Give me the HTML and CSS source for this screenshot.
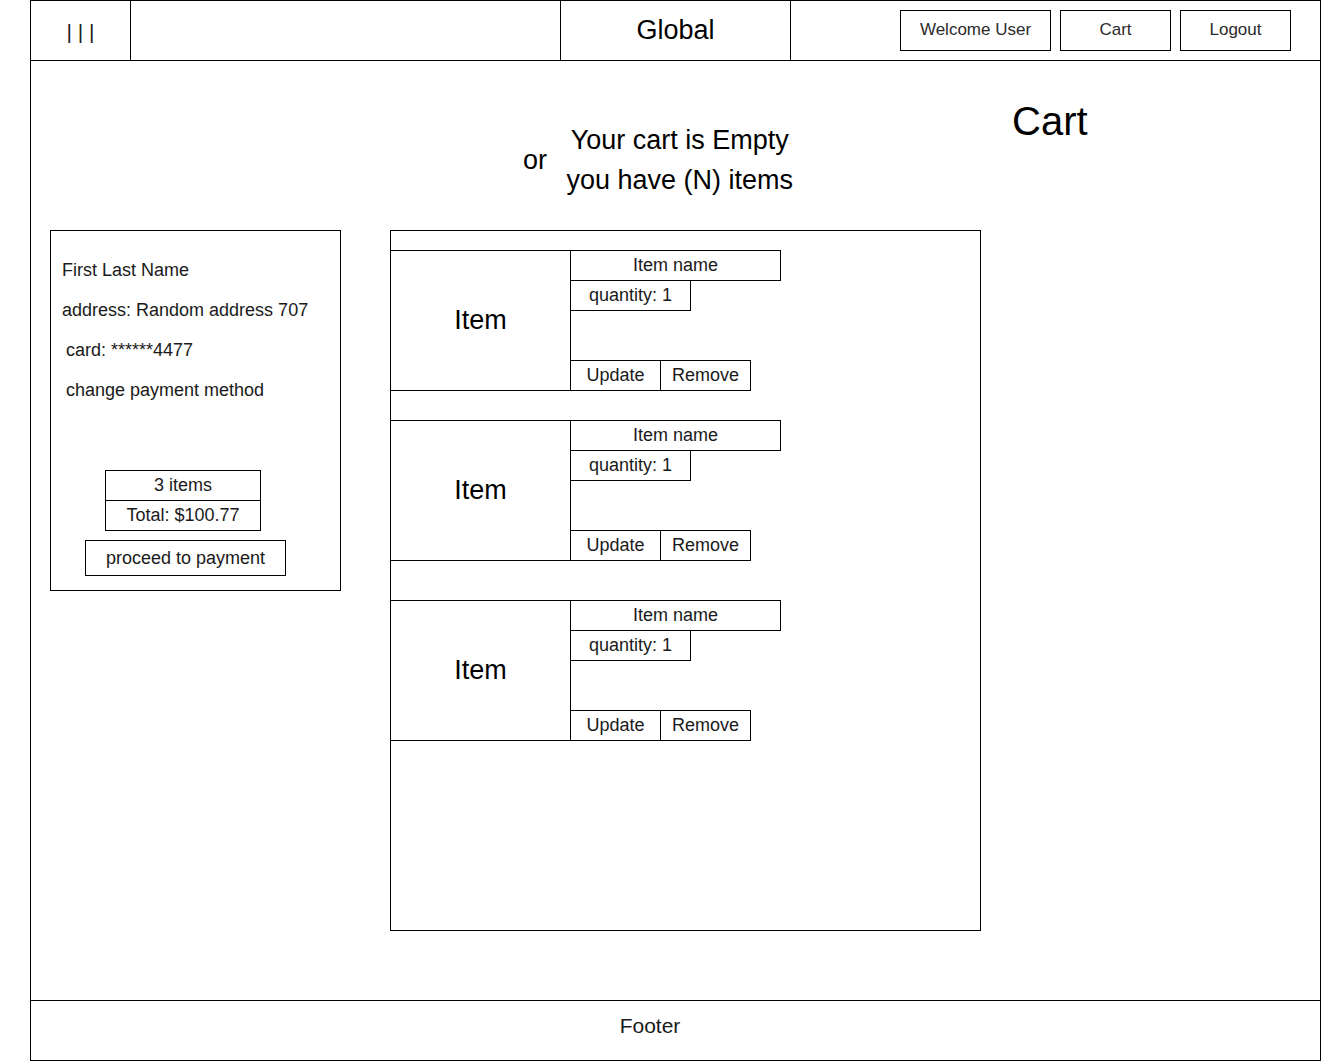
FILE: index.html
```html
<!DOCTYPE html>
<html lang="en">
<head>
<meta charset="utf-8">
<meta name="viewport" content="width=device-width, initial-scale=1">
<title>Cart</title>
<link rel="stylesheet" href="styles.css">
</head>
<body>
<div class="page">
  <header class="topbar">
    <button class="menu" type="button" aria-label="Menu">| | |</button>
    <div class="topbar-space"></div>
    <div class="brand">Global</div>
    <nav class="account">
      <a class="nav-button nav-wide" href="#user">Welcome User</a>
      <a class="nav-button" href="#cart">Cart</a>
      <a class="nav-button" href="#logout">Logout</a>
    </nav>
  </header>

  <main class="main">
    <div class="intro">
      <div class="status">
        <span>or</span>
        <div class="status-lines">
          <p>Your cart is Empty</p>
          <p>you have (N) items</p>
        </div>
      </div>
      <h1 class="title">Cart</h1>
    </div>

    <div class="columns">
      <aside class="summary">
        <div class="customer">
          <p>First Last Name</p>
          <p>address: Random address 707</p>
          <p class="indent">card: ******4477</p>
          <p class="indent"><a href="#payment-method">change payment method</a></p>
        </div>
        <div class="totals">
          <p>3 items</p>
          <p>Total: $100.77</p>
        </div>
        <button class="proceed" type="button">proceed to payment</button>
      </aside>

      <section class="items" aria-label="Items in cart">
        <article class="item">
          <div class="item-image">Item</div>
          <div class="item-details">
            <h2 class="item-name">Item name</h2>
            <p class="quantity">quantity: 1</p>
            <div class="actions">
              <button type="button">Update</button>
              <button type="button">Remove</button>
            </div>
          </div>
        </article>
        <article class="item">
          <div class="item-image">Item</div>
          <div class="item-details">
            <h2 class="item-name">Item name</h2>
            <p class="quantity">quantity: 1</p>
            <div class="actions">
              <button type="button">Update</button>
              <button type="button">Remove</button>
            </div>
          </div>
        </article>
        <article class="item">
          <div class="item-image">Item</div>
          <div class="item-details">
            <h2 class="item-name">Item name</h2>
            <p class="quantity">quantity: 1</p>
            <div class="actions">
              <button type="button">Update</button>
              <button type="button">Remove</button>
            </div>
          </div>
        </article>
      </section>
    </div>
  </main>

  <footer class="footer">Footer</footer>
</div>
</body>
</html>
```

FILE: styles.css
```css
* {
  box-sizing: border-box;
}

body {
  margin: 0;
  background: #fff;
  color: #1a1a1a;
  font-family: "Liberation Sans", Arial, sans-serif;
  font-size: 18px;
  line-height: 28px;
}

p,
h1,
h2 {
  margin: 0;
  font-weight: normal;
}

a {
  color: inherit;
  text-decoration: none;
}

button {
  margin: 0;
  padding: 0;
  border: 1px solid #000;
  border-radius: 0;
  background: #fff;
  color: inherit;
  font: inherit;
  cursor: pointer;
}

.page {
  display: flex;
  flex-direction: column;
  min-height: 100vh;
  margin-left: 30px;
  border: 1px solid #000;
}

/* Top bar */
.topbar {
  display: grid;
  grid-template-columns: 100px 430fr 230px 529fr;
  min-height: 60px;
  border-bottom: 1px solid #000;
}

.menu {
  border-width: 0 1px 0 0;
  padding-top: 2px;
  font-size: 21px;
}

.topbar-space,
.brand {
  border-right: 1px solid #000;
}

.brand {
  display: grid;
  place-items: center;
  padding-bottom: 2px;
  color: #000;
  font-size: 27px;
}

.account {
  display: flex;
  justify-content: flex-end;
  align-items: center;
  gap: 9px;
  padding-right: 29px;
}

.nav-button {
  width: 111px;
  padding: 5px 0 6px;
  border: 1px solid #000;
  color: #2b2b2b;
  font-size: 17px;
  text-align: center;
}

.nav-wide {
  width: 151px;
}

/* Cart status and page title */
.main {
  flex: 1;
  padding-bottom: 69px;
}

.intro {
  display: grid;
  grid-template-columns: 492fr 270px 219fr 76px 232fr;
  padding: 40px 0 30px;
  color: #000;
}

.status {
  grid-column: 2;
  display: flex;
  justify-content: space-between;
  align-items: center;
  padding-top: 19px;
  font-size: 27px;
  line-height: 40px;
  text-align: center;
}

.title {
  grid-column: 4;
  font-size: 40px;
  line-height: 40px;
}

.columns {
  display: grid;
  grid-template-columns: 291px 591fr 290fr;
  gap: 49px;
  align-items: start;
  padding-left: 19px;
}

/* Order summary */
.summary {
  padding: 19px 11px 14px;
  border: 1px solid #000;
}

.customer {
  line-height: 40px;
}

.indent {
  padding-left: 4px;
}

.totals {
  width: 156px;
  margin: 60px 0 9px 43px;
  border: 1px solid #000;
  text-align: center;
  line-height: 29px;
}

.totals p + p {
  border-top: 1px solid #000;
}

.proceed {
  width: 201px;
  height: 36px;
  margin-left: 23px;
  display: block;
}

/* Item list */
.items {
  min-height: 701px;
  padding-top: 19px;
  border: 1px solid #000;
}

.item {
  display: flex;
  min-height: 141px;
  margin-bottom: 29px;
}

.item:last-child {
  margin-top: 39px;
}

.item-image {
  display: grid;
  place-items: center;
  width: 180px;
  padding-bottom: 2px;
  border: 1px solid #000;
  border-left: 0;
  color: #000;
  font-size: 27px;
}

.item-details {
  display: flex;
  flex-direction: column;
  align-items: flex-start;
}

.item-name {
  width: 210px;
  border: 1px solid #000;
  border-left: 0;
  font-size: 18px;
  line-height: 29px;
  text-align: center;
}

.quantity {
  width: 120px;
  border: 1px solid #000;
  border-width: 0 1px 1px 0;
  line-height: 29px;
  text-align: center;
}

.actions {
  display: flex;
  margin-top: auto;
}

.actions button {
  width: 90px;
  height: 31px;
  padding-bottom: 2px;
  border-left: 0;
}

.footer {
  padding: 10px 51px 19px 0;
  border-top: 1px solid #000;
  font-size: 21px;
  line-height: 30px;
  text-align: center;
}
```
